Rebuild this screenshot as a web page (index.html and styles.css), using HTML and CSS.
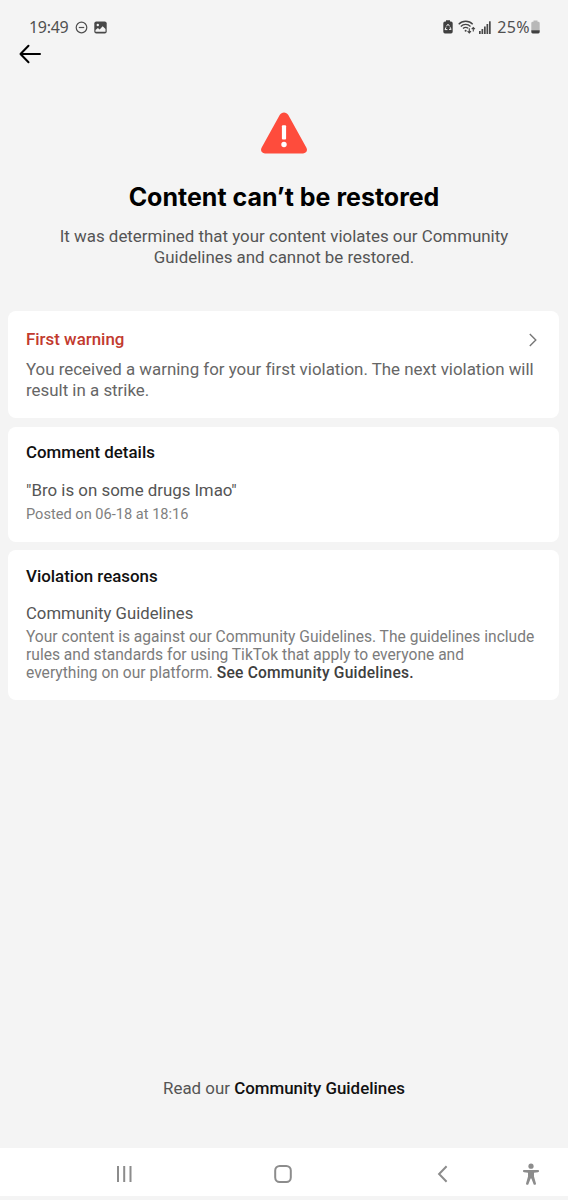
FILE: index.html
```html
<!DOCTYPE html>
<html lang="en">
<head>
    <meta charset="UTF-8">
    <meta name="viewport" content="width=device-width, initial-scale=1.0">
    <title>Content can’t be restored</title>
    <link rel="stylesheet" href="styles.css">
</head>
<body>

    <div class="status-bar">
        <span class="clock">19:49</span>
        <svg class="dnd" width="13" height="13" viewBox="0 0 13 13" fill="none" stroke="#505050" stroke-width="1.2">
            <circle cx="6.5" cy="6.5" r="5.3"/>
            <path d="M3.8 6.5h5.4"/>
        </svg>
        <svg class="photo" width="13" height="13" viewBox="0 0 13 13">
            <rect x="0.3" y="0.5" width="12.4" height="12" rx="2" fill="#484848"/>
            <circle cx="3.8" cy="4" r="1.2" fill="#f4f4f4"/>
            <path d="M1.5 10.8V8.9l2.4-2 1.7 1.5 3.1-3.1 2.8 2.8v2.7z" fill="#f4f4f4"/>
        </svg>
        <div class="status-right">
            <svg width="10" height="14" viewBox="0 0 10 14">
                <path d="M3 0.3h4v1.2h1a1.7 1.7 0 0 1 1.7 1.7v8.6a1.7 1.7 0 0 1-1.7 1.7H2a1.7 1.7 0 0 1-1.7-1.7V3.2A1.7 1.7 0 0 1 2 1.5h1z" fill="#404040"/>
                <path d="M3.4 6.3L5 4.2l1.6 2.1M7.1 7.2l1 2.2H6M4.4 9.6H2l1-2.3" fill="none" stroke="#f4f4f4" stroke-width="1"/>
            </svg>
            <svg class="wifi" width="18" height="14" viewBox="0 0 18 14" fill="none" stroke="#454545" stroke-width="1.3">
                <path d="M0.7 4.3C4.5 0.2 11 0.2 14.7 4.3M2.8 6.5c2.7-2.8 7-2.8 9.7 0M5 8.6c1.4-1.3 3.8-1.3 5.2-.3"/>
                <circle cx="7.6" cy="10.8" r="1" fill="#454545" stroke="none"/>
                <path d="M11.3 8.2v4.6M9.6 11.2l1.7 1.7 1.7-1.7M15.3 11.5V7.6M13.7 9.1l1.6-1.6 1.6 1.6" stroke-width="1.1"/>
            </svg>
            <svg class="signal" width="12" height="13" viewBox="0 0 12 13" fill="#484848">
                <rect x="0" y="10" width="1.7" height="3"/>
                <rect x="2.5" y="8" width="1.7" height="5"/>
                <rect x="5" y="5.5" width="1.7" height="7.5"/>
                <rect x="7.5" y="3" width="1.7" height="10"/>
                <rect x="10" y="0.3" width="1.7" height="12.7"/>
            </svg>
            <span class="percent">25%</span>
            <svg width="9" height="14" viewBox="0 0 9 14">
                <path d="M2.5 0.5h4v1.3h.8a1.4 1.4 0 0 1 1.4 1.4V10.5H.3V3.2a1.4 1.4 0 0 1 1.4-1.4h.8z" fill="#b8b8b8"/>
                <path d="M.3 10.3h8.4v1.7a1.4 1.4 0 0 1-1.4 1.4H1.7A1.4 1.4 0 0 1 .3 12z" fill="#404040"/>
            </svg>
        </div>
    </div>

    <div class="top-bar">
        <svg width="23" height="20" viewBox="0 0 23 20" fill="none" stroke="#000" stroke-width="2" stroke-linecap="round" stroke-linejoin="round">
            <path d="M21 10H1.5M9.5 1.8L1.5 10l8 8.2"/>
        </svg>
    </div>

    <div class="hero">
        <svg width="46" height="42" viewBox="0 0 46 42">
            <path d="M18.7 3C20.6-.5 25.4-.5 27.3 3l18 32.5c1.7 3 0 5.9-3.3 5.9H4c-3.3 0-5-2.9-3.3-5.9z" fill="#fe4c3c"/>
            <rect x="20.9" y="13.3" width="4.2" height="14.2" rx="1" fill="#fff"/>
            <circle cx="23" cy="32.5" r="2.7" fill="#fff"/>
        </svg>
        <h1>Content can’t be restored</h1>
        <p>It was determined that your content violates our Community<br>Guidelines and cannot be restored.</p>
    </div>

    <div class="cards">
        <div class="card warning">
            <div class="card-head">
                <h2>First warning</h2>
                <svg width="8" height="15" viewBox="0 0 8 15" fill="none" stroke="#777" stroke-width="1.4">
                    <path d="M0.8 2l6 6-6 6"/>
                </svg>
            </div>
            <p>You received a warning for your first violation. The next violation will<br>result in a strike.</p>
        </div>

        <div class="card comment">
            <h2>Comment details</h2>
            <p class="quote">"Bro is on some drugs lmao"</p>
            <p class="posted">Posted on 06-18 at 18:16</p>
        </div>

        <div class="card reasons">
            <h2>Violation reasons</h2>
            <p class="reason">Community Guidelines</p>
            <p class="reason-text">Your content is against our Community Guidelines. The guidelines include<br>rules and standards for using TikTok that apply to everyone and<br>everything on our platform. <b>See Community Guidelines.</b></p>
        </div>
    </div>

    <div class="read-more"><span>Read our </span><b>Community Guidelines</b></div>

    <div class="nav-bar">
        <svg class="recents" width="18" height="18" viewBox="0 0 18 18" stroke="#8c8c8c" stroke-width="2">
            <path d="M3 1v16M9.2 1v16M15.5 1v16"/>
        </svg>
        <svg class="home" width="18" height="18" viewBox="0 0 18 18" fill="none" stroke="#8c8c8c" stroke-width="2">
            <rect x="1.2" y="1" width="15.6" height="16" rx="4.5"/>
        </svg>
        <svg class="back" width="11" height="18" viewBox="0 0 11 18" fill="none" stroke="#8c8c8c" stroke-width="2">
            <path d="M9.6 1.3L2.1 9l7.5 7.7"/>
        </svg>
        <svg class="person" width="18" height="22" viewBox="0 0 18 22" fill="#8c8c8c">
            <circle cx="9" cy="3.2" r="2.6"/>
            <path d="M2 7h14a1.1 1.1 0 0 1 0 2.2l-4 .5v3.8l1.9 6.7a1.2 1.2 0 0 1-2.4.7L9.4 15.5h-.8l-2.1 5.4a1.2 1.2 0 0 1-2.4-.7L6 13.5V9.7l-4-.5A1.1 1.1 0 0 1 2 7z"/>
        </svg>
    </div>

</body>
</html>
```
FILE: styles.css
```css
* {
    box-sizing: border-box;
}
body {
    margin: 0;
    height: 1200px;
    display: flex;
    flex-direction: column;
    font-family: Roboto, sans-serif;
    font-size: 16.9px;
    font-variant-ligatures: none;
    background-color: #f4f4f4;
    color: #555;
}
h1, h2, p {
    margin: 0;
}
svg {
    display: block;
    flex: none;
}
b {
    font-weight: 500;
}
.status-bar {
    height: 40px;
    padding: 14px 28px 0 29px;
    display: flex;
    align-items: center;
    font-family: "Noto Sans", sans-serif;
    font-size: 16px;
    line-height: 26px;
    color: #505050;
}
.clock {
    width: 46px;
    letter-spacing: -0.3px;
}
.photo {
    margin-left: 6px;
}
.status-right {
    margin-left: auto;
    display: flex;
    align-items: center;
}
.wifi {
    margin-left: 5px;
}
.signal {
    margin-left: 3px;
}
.percent {
    margin: 0 1px 0 6px;
    letter-spacing: 0.4px;
}
.top-bar {
    height: 24px;
    padding: 4px 0 0 19px;
}
.hero {
    height: 247px;
    padding-top: 48px;
    display: flex;
    flex-direction: column;
    align-items: center;
    text-align: center;
}
.hero h1 {
    margin-top: 25px;
    font-family: Inter, sans-serif;
    font-size: 25px;
    line-height: 36px;
    font-weight: 700;
    color: #000;
}
.hero p {
    margin-top: 11px;
    line-height: 21px;
}
.cards {
    padding: 0 9px 0 8px;
    display: flex;
    flex-direction: column;
    gap: 9px;
}
.card {
    padding: 0 18px;
    background: #fff;
    border-radius: 8px;
}
.card h2 {
    font-size: 16.9px;
    line-height: 22px;
    font-weight: 500;
    color: #111;
}
.warning {
    height: 107px;
    padding-top: 17px;
}
.card-head {
    display: flex;
    justify-content: space-between;
    align-items: center;
    padding-right: 4px;
}
.warning .card-head h2 {
    color: #c23a2e;
}
.warning p {
    margin-top: 9px;
    line-height: 21px;
    color: #666;
}
.comment {
    height: 115px;
    padding-top: 14px;
}
.quote {
    margin-top: 16px;
    line-height: 22px;
}
.posted {
    margin-top: 3px;
    font-size: 14.6px;
    line-height: 20px;
    color: #808080;
}
.reasons {
    height: 150px;
    margin-top: -1px;
    padding-top: 15px;
}
.reason {
    margin-top: 16px;
    font-size: 16.7px;
    line-height: 22px;
}
.reason-text {
    margin-top: 3px;
    font-size: 15.6px;
    line-height: 18.2px;
    color: #7c7c7c;
}
.reason-text b {
    letter-spacing: 0.2px;
    color: #404040;
}
.read-more {
    margin-top: auto;
    padding-bottom: 49px;
    line-height: 22px;
    text-align: center;
    white-space: pre;
}
.read-more b {
    color: #111;
}
.nav-bar {
    height: 52px;
    padding: 3px 28px 0 115px;
    display: flex;
    align-items: center;
    background: #fff;
    border-bottom: 4px solid #f4f4f4;
}
.home {
    margin-left: 141px;
}
.back {
    margin-left: 145px;
}
.person {
    margin-left: auto;
}
```
